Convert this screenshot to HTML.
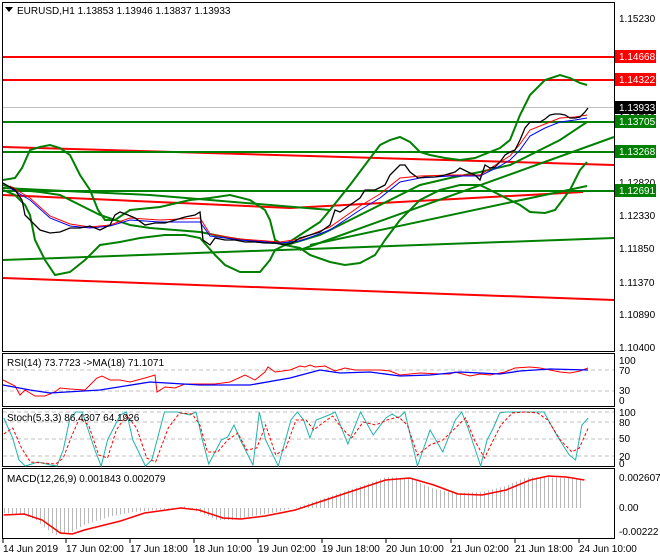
<!DOCTYPE html>
<html><head><meta charset="utf-8"><style>
html,body{margin:0;padding:0;background:#fff;}
svg{display:block;font-family:"Liberation Sans",sans-serif;font-size:10px;}
</style></head><body>
<svg width="660" height="560" viewBox="0 0 660 560" xmlns="http://www.w3.org/2000/svg">
<rect width="660" height="560" fill="#fff"/>
<g fill="none" stroke="#000" stroke-width="1">
<rect x="2.5" y="2.5" width="612" height="349"/>
<rect x="2.5" y="353.5" width="612" height="53"/>
<rect x="2.5" y="408.5" width="612" height="58"/>
<rect x="2.5" y="468.5" width="612" height="70"/>
</g>
<line x1="3" y1="107.5" x2="614" y2="107.5" stroke="#c0c0c0"/>
<g stroke="#ff0000" stroke-width="2" fill="none">
<line x1="3" y1="57" x2="614" y2="57"/>
<line x1="3" y1="80" x2="614" y2="80"/>
<line x1="3" y1="147" x2="614" y2="165"/>
<line x1="3" y1="278" x2="614" y2="300"/>
<polyline points="3,195 290,208 583,192"/>
</g>
<g stroke="#008000" stroke-width="2" fill="none">
<line x1="3" y1="122" x2="614" y2="122"/>
<line x1="3" y1="152" x2="614" y2="152"/>
<line x1="3" y1="191" x2="614" y2="191"/>
<line x1="3" y1="260" x2="614" y2="238"/>
<polyline points="3,188 150,195 330,210"/>
<line x1="300" y1="250" x2="614" y2="137"/>
<line x1="310" y1="245" x2="587" y2="186"/>
<polyline points="3,180 15,178 22,168 30,150 40,147 50,145 60,148 70,155 80,175 90,190 98,210 105,220 115,220 130,210 160,207 190,200 210,198 230,195 250,200 265,210 270,220 275,240 285,245 300,235 320,222 330,210 350,185 365,165 380,145 390,140 400,137 410,142 420,152 430,155 445,158 460,160 475,158 490,152 500,148 510,140 520,115 530,95 545,80 560,75 570,78 580,83 587,85"/>
<polyline points="3,190 15,195 25,205 30,215 35,240 45,260 55,275 70,272 85,260 100,245 120,242 140,238 165,235 185,235 200,238 215,255 225,265 240,272 260,272 270,260 275,250 285,245 300,248 310,255 330,262 345,265 360,263 375,255 385,240 400,220 420,200 440,190 460,185 480,185 500,195 510,200 520,205 530,212 545,213 555,210 570,190 580,170 587,162"/>
<polyline points="3,185 20,190 40,192 60,195 80,205 100,215 130,225 150,228 175,230 200,232 230,238 260,242 290,244 320,235 340,225 360,215 380,205 400,195 420,185 450,178 480,172 510,165 540,150 560,140 587,122"/>
</g>
<polyline fill="none" stroke="#0000ff" stroke-width="1" points="10,188 30,200 50,218 70,226 90,228 110,226 130,220 160,222 200,222 210,236 240,240 280,243 300,241 330,230 360,210 380,198 400,182 420,178 450,176 480,176 500,166 510,160 520,150 530,136 545,128 560,122 575,120 587,118"/>
<polyline fill="none" stroke="#ff0000" stroke-width="1" points="10,186 30,198 50,216 70,224 90,227 110,225 130,218 160,220 200,218 210,234 240,239 280,242 300,239 330,227 360,206 380,194 400,178 420,176 450,175 480,175 500,162 510,156 520,144 530,130 545,124 560,118 575,117 587,115"/>
<polyline fill="none" stroke="#000" stroke-width="1.3" points="3,183 15,190 22,200 25,215 30,220 40,230 50,233 60,232 70,228 80,228 90,226 100,230 110,225 115,215 120,212 128,215 135,218 145,225 155,223 165,223 175,220 185,217 195,215 200,212 203,240 210,245 215,238 225,240 235,240 245,242 255,242 265,243 275,243 285,245 292,243 300,238 310,235 320,232 330,225 335,210 340,212 350,205 360,198 365,190 375,190 385,185 390,175 400,165 405,165 410,172 418,178 425,177 435,177 445,175 455,172 460,168 468,172 475,175 480,180 485,165 490,168 495,167 500,162 505,155 510,152 515,150 520,140 525,128 530,122 535,122 540,122 545,119 550,115 555,114 560,114 565,115 570,118 575,118 580,117 585,112 588,108"/>
<g fill="#000"><polygon points="5,7 13,7 9,12"/></g>
<text x="17" y="14" fill="#000">EURUSD,H1  1.13853 1.13946 1.13837 1.13933</text>
<g fill="#000">
<text x="619" y="22">1.15230</text>
<text x="619" y="121">1.13780</text>
<text x="619" y="186">1.12820</text>
<text x="619" y="219">1.12330</text>
<text x="619" y="252">1.11850</text>
<text x="619" y="286">1.11370</text>
<text x="619" y="318">1.10890</text>
<text x="619" y="351">1.10400</text>
</g>
<rect x="615" y="50" width="41" height="13" fill="#ff0000"/><text x="619" y="60" fill="#fff">1.14668</text>
<rect x="615" y="73" width="41" height="13" fill="#ff0000"/><text x="619" y="83" fill="#fff">1.14322</text>
<rect x="615" y="101" width="41" height="13" fill="#000"/><text x="619" y="111" fill="#fff">1.13933</text>
<rect x="615" y="115" width="41" height="13" fill="#008000"/><text x="619" y="125" fill="#fff">1.13705</text>
<rect x="615" y="145" width="41" height="13" fill="#008000"/><text x="619" y="155" fill="#fff">1.13268</text>
<rect x="615" y="184" width="41" height="13" fill="#008000"/><text x="619" y="194" fill="#fff">1.12691</text>
<!-- RSI -->
<g stroke="#c0c0c0" stroke-dasharray="4,3"><line x1="3" y1="370" x2="614" y2="370"/><line x1="3" y1="391" x2="614" y2="391"/></g>
<polyline fill="none" stroke="#ff0000" points="3,380 15,386 20,395 25,390 35,396 45,396 55,392 60,388 70,389 85,390 90,385 97,378 102,376 110,380 120,380 130,382 145,378 155,375 157,392 165,387 175,388 185,384 205,384 215,384 230,382 245,375 255,380 265,372 268,367 275,372 290,370 300,366 305,367 310,365 315,367 325,366 335,371 345,368 355,370 380,370 390,371 400,375 420,373 440,374 450,374 455,372 470,376 480,374 490,375 505,372 515,368 530,367 540,368 550,370 560,372 570,373 580,371 588,368"/>
<polyline fill="none" stroke="#0000ff" stroke-width="1.3" points="3,385 30,390 50,393 100,390 150,382 200,385 250,385 290,378 320,370 340,373 370,372 400,376 430,375 460,372 500,374 520,371 550,369 588,370"/>
<text x="7" y="366" fill="#000">RSI(14) 73.7723  -&gt;MA(18) 71.1071</text>
<g fill="#000"><text x="619" y="364">100</text><text x="619" y="374">70</text><text x="619" y="394">30</text><text x="619" y="404">0</text></g>
<!-- Stoch -->
<g stroke="#c0c0c0" stroke-dasharray="4,3"><line x1="3" y1="412" x2="614" y2="412"/><line x1="3" y1="422" x2="614" y2="422"/><line x1="3" y1="439" x2="614" y2="439"/><line x1="3" y1="456" x2="614" y2="456"/></g>
<g transform="scale(1.265,1)">
<polyline fill="none" stroke="#20b2aa" vector-effect="non-scaling-stroke" points="3,418 10,438 15,460 20,466 30,462 40,465 45,466 50,450 55,420 60,412 65,412 75,450 80,466 85,440 95,415 100,412 105,440 115,466 120,460 130,412 140,412 150,415 155,412 160,440 165,464 175,440 180,437 185,425 190,440 200,465 205,412 210,440 220,466 230,420 235,412 240,420 245,438 250,420 260,415 265,412 275,444 285,412 295,435 305,418 310,414 315,418 320,412 330,466 340,430 350,452 360,420 365,412 370,428 380,466 385,440 390,428 395,413 400,412 410,412 420,412 430,412 440,435 450,455 455,460 460,425 465,418"/>
<polyline fill="none" stroke="#ff0000" stroke-dasharray="3,2" vector-effect="non-scaling-stroke" points="3,434 10,428 17,448 24,462 34,463 44,464 50,458 57,435 63,418 70,425 78,455 85,458 92,430 100,415 108,428 116,458 123,462 133,428 142,413 152,414 158,425 164,452 172,452 180,440 188,433 195,450 203,448 210,425 218,455 226,448 234,420 242,420 248,430 255,423 263,416 270,428 278,438 287,422 297,425 306,420 315,417 322,425 330,455 340,445 350,440 360,428 368,418 375,440 383,458 390,440 396,425 405,413 415,412 425,413 433,420 443,440 452,452 458,448 465,428"/>
</g>
<text x="7" y="421" fill="#000">Stoch(5,3,3) 86.4307 64.1926</text>
<g fill="#000"><text x="619" y="416">100</text><text x="619" y="426">80</text><text x="619" y="442">50</text><text x="619" y="460">20</text><text x="619" y="467">0</text></g>
<!-- MACD -->
<defs><pattern id="vl" width="4" height="10" patternUnits="userSpaceOnUse"><rect x="0" y="0" width="1" height="10" fill="#b8b8b8"/></pattern></defs>
<polygon fill="url(#vl)" points="4,508 4,513 24,515 36,520 48,530 55,535 70,533 84,525 108,517 133,512 157,510 178,508 184,506 190,508 199,512 217,520 235,520 253,516 277,512 301,506 325,498 349,490 373,482 386,477 410,478 434,489 458,493 482,492 506,486 524,478 542,477 566,478 578,478 584,483 584,508"/>
<g transform="scale(1.205,1)">
<polyline fill="none" stroke="#ff0000" stroke-width="1.5" vector-effect="non-scaling-stroke" points="3,515 20,514 35,520 50,533 60,534 70,530 100,521 120,513 150,508 165,510 185,518 200,519 220,516 245,510 270,500 300,488 320,480 340,478 360,485 380,494 400,495 420,490 440,480 455,476 470,477 485,480"/>
</g>
<text x="7" y="482" fill="#000">MACD(12,26,9) 0.001843 0.002079</text>
<g fill="#000"><text x="619" y="481">0.002607</text><text x="619" y="511">0.00</text><text x="619" y="535">-0.00222</text></g>
<g fill="#000">
<text x="3" y="552">14 Jun 2019</text>
<text x="66" y="552">17 Jun 02:00</text>
<text x="130" y="552">17 Jun 18:00</text>
<text x="194" y="552">18 Jun 10:00</text>
<text x="258" y="552">19 Jun 02:00</text>
<text x="322" y="552">19 Jun 18:00</text>
<text x="386" y="552">20 Jun 10:00</text>
<text x="451" y="552">21 Jun 02:00</text>
<text x="515" y="552">21 Jun 18:00</text>
<text x="579" y="552">24 Jun 10:00</text>
</g>
<g stroke="#000"><line x1="3" y1="539" x2="3" y2="543"/><line x1="66" y1="539" x2="66" y2="543"/><line x1="130" y1="539" x2="130" y2="543"/><line x1="194" y1="539" x2="194" y2="543"/><line x1="258" y1="539" x2="258" y2="543"/><line x1="322" y1="539" x2="322" y2="543"/><line x1="386" y1="539" x2="386" y2="543"/><line x1="451" y1="539" x2="451" y2="543"/><line x1="515" y1="539" x2="515" y2="543"/><line x1="579" y1="539" x2="579" y2="543"/></g>
</svg>
</body></html>
